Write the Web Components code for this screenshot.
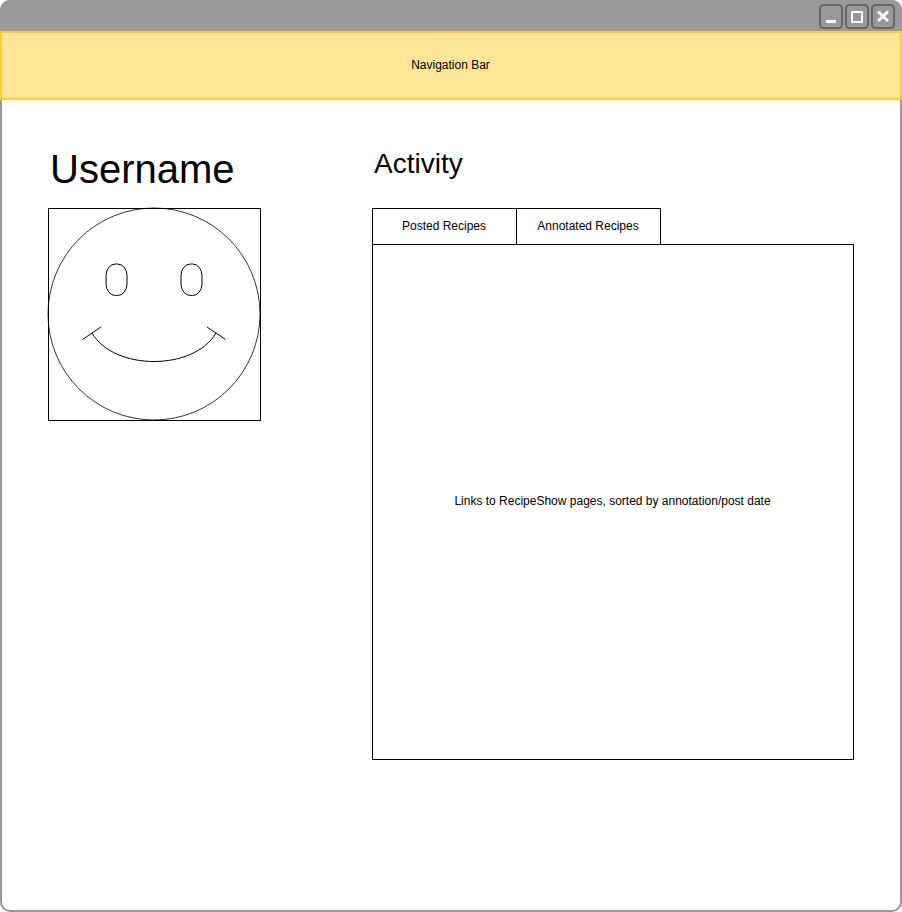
<!DOCTYPE html>
<html lang="en">
<head>
<meta charset="utf-8">
<title>User profile wireframe</title>
<style>
html, body { margin: 0; height: 100%; background: #fff; }
body { font: 12px/14px "Liberation Sans", Arial, sans-serif; color: #000; overflow: hidden; }
</style>
</head>
<body>
<app-window>
  <nav-bar>Navigation Bar</nav-bar>
  <profile-layout>
    <user-profile slot="profile">Username</user-profile>
    <activity-panel slot="activity">
      <span slot="title">Activity</span>
      <tab-item slot="tabs">Posted Recipes</tab-item>
      <tab-item slot="tabs">Annotated Recipes</tab-item>
      Links to RecipeShow pages, sorted by annotation/post date
    </activity-panel>
  </profile-layout>
</app-window>
<script>
function define(name, html) {
  const template = document.createElement('template');
  template.innerHTML = html;
  customElements.define(name, class extends HTMLElement {
    constructor() {
      super();
      this.attachShadow({ mode: 'open' }).append(template.content.cloneNode(true));
    }
  });
}

define('window-controls', `
  <style>
    :host { display: flex; gap: 2px; }
    svg { display: block; width: 24px; height: 25px; }
    rect.frame { fill: none; stroke: #666; stroke-width: 2; }
    .glyph { fill: none; stroke: #fff; stroke-width: 2; }
  </style>
  <svg viewBox="0 0 24 25"><rect class="frame" x="1" y="1" width="22" height="23" rx="3.5"/><path class="glyph" style="stroke-width:3" d="M7 17.500H17"/></svg>
  <svg viewBox="0 0 24 25"><rect class="frame" x="1" y="1" width="22" height="23" rx="3.5"/><rect class="glyph" x="7" y="8" width="10" height="10"/></svg>
  <svg viewBox="0 0 24 25"><rect class="frame" x="1" y="1" width="22" height="23" rx="3.5"/><path class="glyph" style="stroke-width:2.8" d="M7 7.500L17 17M17 7.500L7 17"/></svg>`);

define('app-window', `
  <style>
    :host { display: flex; flex-direction: column; box-sizing: border-box; width: 902px; height: 912px;
      background: linear-gradient(#999 31px, #fff 31px); border-radius: 10px; box-shadow: inset 0 0 0 2px #999; }
    header { display: flex; justify-content: flex-end; height: 31px; padding: 4px 7px 0 0; box-sizing: border-box; }
  </style>
  <header><window-controls></window-controls></header>
  <slot></slot>`);

define('nav-bar', `
  <style>
    :host { display: flex; align-items: center; justify-content: center; box-sizing: border-box;
      height: 69px; padding: 0 1px 2px 0; background: #ffe599; border: 2px solid #ffcc33; }
  </style>
  <slot></slot>`);

define('profile-layout', `
  <style>
    :host { display: grid; grid-template-columns: 213px 482px; column-gap: 111px; padding: 44px 48px 0; }
  </style>
  <slot name="profile"></slot><slot name="activity"></slot>`);

define('smiley-avatar', `
  <style>
    :host { display: block; }
    svg { display: block; overflow: visible; fill: none; stroke: #000; }
  </style>
  <svg width="213" height="213" viewBox="0 0 213 213">
    <rect x=".5" y=".5" width="212" height="212"/>
    <circle cx="106" cy="106" r="106" stroke-width=".8"/>
    <rect x="58" y="56" width="21" height="31.5" rx="9.5" ry="11.5"/>
    <rect x="133" y="56" width="21" height="31.5" rx="9.5" ry="11.5"/>
    <path d="M34.5 131.5L53 119M159 119L177.500 131.500M44 125C66 163 146 163 168 125"/>
  </svg>`);

define('user-profile', `
  <style>
    :host { display: block; }
    h1 { margin: 0; height: 64px; padding-left: 2px; font-size: 40px; line-height: 50px; font-weight: 400; box-sizing: border-box; }
  </style>
  <h1><slot></slot></h1>
  <smiley-avatar></smiley-avatar>`);

define('tab-item', `
  <style>
    :host { display: flex; align-items: center; justify-content: center; width: 145px; height: 37px;
      padding: 0 1px 2px 0; box-sizing: border-box; border: 1px solid #000; margin-right: -1px; }
  </style>
  <slot></slot>`);

define('activity-panel', `
  <style>
    :host { display: block; }
    h2 { margin: 0; height: 64px; padding-left: 2px; font-size: 28px; line-height: 40px; font-weight: 400; box-sizing: border-box; }
    nav { display: flex; }
    main { display: flex; align-items: center; justify-content: center; box-sizing: border-box;
      height: 516px; margin-top: -1px; padding: 0 1px 2px 0; border: 1px solid #000; }
  </style>
  <h2><slot name="title"></slot></h2>
  <nav><slot name="tabs"></slot></nav>
  <main><slot></slot></main>`);
</script>
</body>
</html>
